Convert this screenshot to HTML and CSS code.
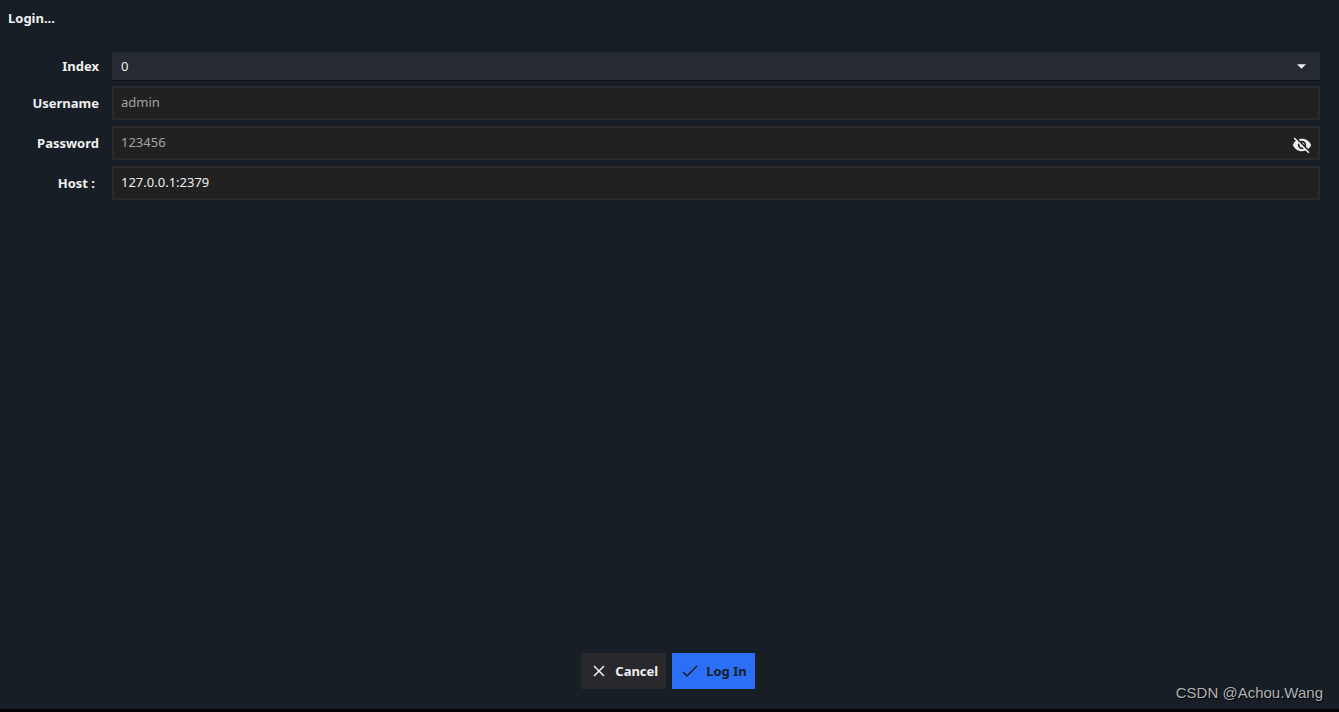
FILE: index.html
```html
<!DOCTYPE html>
<html lang="en">
<head>
<meta charset="utf-8">
<title>Login</title>
<link rel="stylesheet" href="styles.css">
</head>
<body>
<form class="dialog">
  <h1 class="title">Login...</h1>
  <div class="fields">
    <label class="label" for="index">Index</label>
    <div class="control">
      <select class="select" id="index"><option>0</option></select>
      <svg class="caret" viewBox="0 0 8 4" aria-hidden="true"><path d="M0 0h8L4 4z"/></svg>
    </div>
    <label class="label" for="username">Username</label>
    <div class="control"><input class="input" id="username" type="text" placeholder="admin"></div>
    <label class="label" for="password">Password</label>
    <div class="control">
      <input class="input" id="password" type="password" placeholder="123456">
      <button class="reveal" type="button" aria-label="Show password">
        <svg viewBox="0 0 24 24" aria-hidden="true"><path d="M12 7c2.76 0 5 2.24 5 5 0 .65-.13 1.26-.36 1.83l2.92 2.92c1.51-1.26 2.7-2.89 3.43-4.75-1.73-4.39-6-7.5-11-7.5-1.4 0-2.74.25-3.98.7l2.16 2.16C10.74 7.13 11.35 7 12 7zM2 4.27l2.28 2.28.46.46C3.08 8.3 1.78 10.02 1 12c1.73 4.39 6 7.5 11 7.5 1.55 0 3.03-.3 4.38-.84l.42.42L19.73 22 21 20.73 3.27 3 2 4.27zM7.53 9.8l1.55 1.55c-.05.21-.08.43-.08.65 0 1.66 1.34 3 3 3 .22 0 .44-.03.65-.08l1.55 1.55c-.67.33-1.41.53-2.2.53-2.76 0-5-2.24-5-5 0-.79.2-1.53.53-2.2zm4.31-.78l3.15 3.15.02-.16c0-1.66-1.34-3-3-3l-.17.01z"/></svg>
      </button>
    </div>
    <label class="label label-host" for="host">Host :</label>
    <div class="control"><input class="input" id="host" type="text" value="127.0.0.1:2379"></div>
  </div>
  <div class="actions">
    <button class="button" type="button">
      <svg viewBox="0 0 18 18" aria-hidden="true"><path d="M4 4l10 10M14 4L4 14"/></svg>Cancel
    </button>
    <button class="button button-primary" type="submit">
      <svg viewBox="0 0 18 18" aria-hidden="true"><path d="M2 10l4 4L16 4"/></svg>Log In
    </button>
  </div>
</form>
<div class="watermark">CSDN @Achou.Wang</div>
</body>
</html>
```
FILE: styles.css
```css
* { box-sizing: border-box; }
body {
  margin: 0;
  min-height: 100vh;
  display: flex;
  background: #171e25;
  border-bottom: 3px solid #020305;
  color: #f0f0f0;
  font: 13px/20px "Noto Sans", sans-serif;
}
.dialog {
  flex: 1;
  display: flex;
  flex-direction: column;
  padding: 8px 0 20px;
}
.title {
  margin: 0 8px 24px;
  font-size: 13px;
  font-weight: 700;
}
.fields {
  display: grid;
  grid-template-columns: 91px 1fr;
  gap: 6px 13px;
  align-items: center;
  margin: 0 19px 0 8px;
}
.label { text-align: right; font-weight: 700; }
.label-host { padding-right: 4px; }
.control { position: relative; display: flex; }
.select, .input {
  width: 100%;
  height: 34px;
  margin: 0;
  padding: 0 7px 2px;
  border: 2px solid #2b2b2e;
  border-radius: 1px;
  outline: 0;
  background: #212122;
  color: #f0f0f0;
  font: inherit;
}
.input::placeholder { color: #a3a3a3; opacity: 1; }
.select {
  appearance: none;
  height: 28px;
  padding: 0 9px 1px;
  border: 0;
  border-radius: 0;
  background: #262a33;
  box-shadow: 0 1px #101319;
}
.caret {
  position: absolute;
  right: 14px;
  top: 12px;
  width: 9px;
  height: 5px;
  fill: #f0f0f0;
  pointer-events: none;
}
.reveal {
  position: absolute;
  right: 8px;
  top: 9px;
  padding: 0;
  border: 0;
  background: none;
}
.reveal svg { display: block; width: 20px; height: 20px; fill: #f0f0f0; }
.actions {
  display: flex;
  justify-content: center;
  gap: 6px;
  margin-top: auto;
  padding-right: 3px;
}
.button {
  display: flex;
  align-items: center;
  gap: 7px;
  height: 36px;
  padding: 0 8px 0 9px;
  border: 0;
  background: #29292d;
  color: #f0f0f0;
  font: inherit;
  font-weight: 700;
}
.button svg {
  width: 18px;
  height: 18px;
  fill: none;
  stroke: currentColor;
  stroke-width: 1.5;
}
.button-primary { background: #2a6ff5; color: #171e25; }
.watermark {
  position: absolute;
  right: 16px;
  bottom: 9px;
  color: #b0b2b5;
  font: 15px/20px "Liberation Sans", Arial, sans-serif;
  text-shadow: 1px 1px 1px #000;
}
```
